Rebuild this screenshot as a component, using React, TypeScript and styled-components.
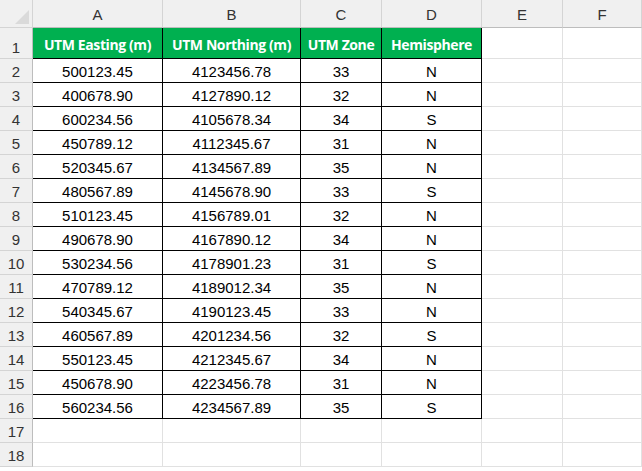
import React from 'react';
import styled, { createGlobalStyle } from 'styled-components';

const Global = createGlobalStyle`
  body { margin: 0; background: #fff; font-family: "Liberation Sans", Arial, sans-serif; }
`;

const cols = [33, 130, 138, 81, 100, 81, 79];
const letters = ['A', 'B', 'C', 'D', 'E', 'F'];

const data: [string, string, string, string][] = [
  ['500123.45', '4123456.78', '33', 'N'],
  ['400678.90', '4127890.12', '32', 'N'],
  ['600234.56', '4105678.34', '34', 'S'],
  ['450789.12', '4112345.67', '31', 'N'],
  ['520345.67', '4134567.89', '35', 'N'],
  ['480567.89', '4145678.90', '33', 'S'],
  ['510123.45', '4156789.01', '32', 'N'],
  ['490678.90', '4167890.12', '34', 'N'],
  ['530234.56', '4178901.23', '31', 'S'],
  ['470789.12', '4189012.34', '35', 'N'],
  ['540345.67', '4190123.45', '33', 'N'],
  ['460567.89', '4201234.56', '32', 'S'],
  ['550123.45', '4212345.67', '34', 'N'],
  ['450678.90', '4223456.78', '31', 'N'],
  ['560234.56', '4234567.89', '35', 'S'],
];
const headers = ['UTM Easting (m)', 'UTM Northing (m)', 'UTM Zone', 'Hemisphere'];

const Sheet = styled.div`
  display: grid;
  grid-template-columns: ${cols.map((c) => c + 'px').join(' ')};
  grid-template-rows: 28px 31px repeat(17, 24px);
  width: 642px;
  height: 471px;
  overflow: hidden;
`;

const Corner = styled.div`
  background: #f0f0f0;
  border-right: 1px solid #d4d4d4;
  border-bottom: 1px solid #d4d4d4;
  position: relative;
  &::after {
    content: '';
    position: absolute;
    right: 3px;
    bottom: 3px;
    border-left: 14px solid transparent;
    border-bottom: 14px solid #dadada;
  }
`;

const ColHead = styled.div`
  background: #f0f0f0;
  border-right: 1px solid #d4d4d4;
  border-bottom: 1px solid #bdbdbd;
  display: flex;
  align-items: flex-end;
  justify-content: center;
  padding-bottom: 4px;
  font-size: 15px;
  color: #333;
`;

const RowHead = styled.div`
  background: #f0f0f0;
  border-right: 1px solid #bdbdbd;
  border-bottom: 1px solid #d4d4d4;
  display: flex;
  align-items: flex-end;
  justify-content: center;
  padding-bottom: 2px;
  font-size: 15px;
  color: #333;
`;

const Cell = styled.div<{ $head?: boolean; $table?: boolean }>`
  box-sizing: border-box;
  display: flex;
  align-items: flex-end;
  justify-content: center;
  padding-bottom: 2px;
  font-size: 15px;
  color: #000;
  border-right: 1px solid ${(p) => (p.$table ? '#000' : '#e1e1e1')};
  border-bottom: 1px solid ${(p) => (p.$table ? '#000' : '#e1e1e1')};
  ${(p) =>
    p.$head &&
    `
    background: #00b050;
    color: #fff;
    font-weight: bold;
    font-family: "Open Sans", "Noto Sans", sans-serif;
    font-size: 14px;
    letter-spacing: -0.4px;
    padding-bottom: 4px;
    white-space: nowrap;
  `}
`;

export default function App() {
  const rows: React.ReactNode[] = [];
  for (let r = 1; r <= 18; r++) {
    rows.push(<RowHead key={'r' + r}>{r}</RowHead>);
    for (let c = 0; c < 6; c++) {
      const inTable = c < 4 && r <= 16;
      let text = '';
      if (inTable) text = r === 1 ? headers[c] : data[r - 2][c];
      rows.push(
        <Cell key={r + '-' + c} $head={r === 1 && c < 4} $table={inTable}>
          {text}
        </Cell>
      );
    }
  }
  return (
    <>
      <Global />
      <Sheet>
        <Corner />
        {letters.map((l) => (
          <ColHead key={l}>{l}</ColHead>
        ))}
        {rows}
      </Sheet>
    </>
  );
}
